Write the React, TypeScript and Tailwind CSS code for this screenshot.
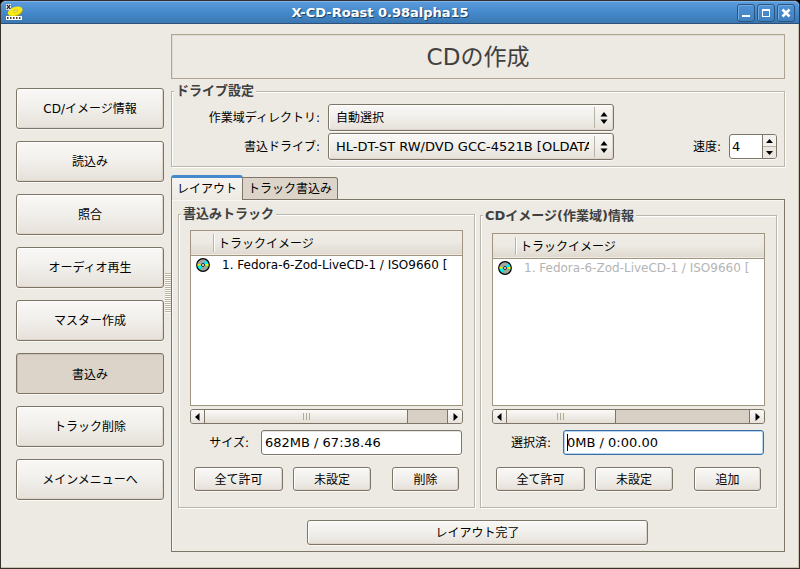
import type { ReactNode } from "react";

const raised =
  "rounded-[3px] border border-[#7d7668] bg-linear-to-b from-[#f9f8f6] via-[#f1efeb] to-[#e6e0d9] shadow-[0_1px_0_#f8f7f4,inset_1px_1px_0_#fff,inset_-1px_-1px_0_#ddd5cb]";

function AppLogo() {
  return (
    <svg width="17" height="17" viewBox="0 0 17 17" aria-hidden="true">
      <g transform="rotate(-20 9 7)">
        <ellipse cx="9" cy="8.400" rx="7.600" ry="4.200" fill="#b89c18" />
        <ellipse cx="9" cy="7.200" rx="7.600" ry="4.200" fill="#f6ea10" />
        <ellipse cx="9.500" cy="7.200" rx="2" ry="1" fill="#fffbb0" stroke="#b89c10" strokeWidth=".6" />
      </g>
      <rect x="0" y="0" width="5" height="6" fill="#e8e8e8" />
      <path d="M.8.8l3.6 4.4M4.2.8L.8 5.2" stroke="#222" strokeWidth="1.2" />
      <rect x="0" y="12" width="16" height="4" fill="#fff" />
      <path
        d="M1 14h2M4 14h2M7 14h2M10 14h2M13 14h2"
        stroke="#444"
        strokeWidth="2"
        strokeDasharray="1 .5"
      />
    </svg>
  );
}

function DiscIcon() {
  return (
    <svg width="14" height="14" viewBox="0 0 14 14" className="block" aria-hidden="true">
      <circle cx="7" cy="7" r="6.300" fill="#a4a4a4" />
      <path d="M7 7L1 5.500V8Z" fill="#f4f400" />
      <path d="M7 7L1 8A6 6 0 0 0 4 12.200Z" fill="#00f0f0" />
      <path d="M7 7L4 12.200L5.500 13Z" fill="#40d080" />
      <path d="M7 7L10 1.800A6 6 0 0 1 13 5.500Z" fill="#00f0f0" />
      <path d="M7 7L13 5.500V8.200Z" fill="#f4f400" />
      <path d="M7 7L13 8.200L12 10Z" fill="#60d060" />
      <circle cx="7" cy="7" r="6.300" fill="none" stroke="#000" strokeWidth="1.200" />
      <circle cx="7" cy="7" r="1.500" fill="#fff" stroke="#222" strokeWidth="1" />
    </svg>
  );
}

function Arrow({ d, w, h }: { d: string; w: number; h: number }) {
  return (
    <svg width={w} height={h} viewBox={`0 0 ${w} ${h}`} className="block" aria-hidden="true">
      <path d={d} fill="#000" />
    </svg>
  );
}

function TitleButton({ label, children }: { label: string; children: ReactNode }) {
  return (
    <button
      type="button"
      aria-label={label}
      className="flex size-[18px] items-center justify-center rounded-[3px] border border-[#2b5580] bg-linear-to-b from-[#4f92d6] to-[#4080bf] shadow-[inset_1px_1px_0_#74ace2]"
    >
      <svg width="10" height="10" viewBox="0 0 10 10" aria-hidden="true">
        {children}
      </svg>
    </button>
  );
}

function NavButton({ label, active }: { label: string; active?: boolean }) {
  return (
    <button
      type="button"
      aria-pressed={active ? true : undefined}
      className={
        active
          ? "h-[41px] w-full rounded-[3px] border border-[#7d7668] bg-[#dcd4c9] pt-[2px] shadow-[0_1px_0_#f8f7f4,inset_1px_1px_0_#c9c0b4]"
          : `h-[41px] w-full ${raised}`
      }
    >
      {label}
    </button>
  );
}

function Combo({ id, label, value, small }: { id: string; label: string; value: string; small?: boolean }) {
  return (
    <>
      <label htmlFor={id} className="mr-2 w-[148px] text-right">
        {label}
      </label>
      <div className="relative w-[286px]">
        <select
          id={id}
          className={`block h-[27px] w-full appearance-none pr-6 pl-[7px] ${small ? "text-[12px]" : "text-[13px]"} ${raised}`}
        >
          <option>{value}</option>
        </select>
        <span className="pointer-events-none absolute top-[3px] right-[19px] h-[21px] border-l border-[#b9b2a7]" />
        <span className="pointer-events-none absolute top-2 right-[6px]">
          <Arrow w={8} h={12} d="M4 0L7.500 4.500H.5ZM.5 7.500H7.500L4 12Z" />
        </span>
      </div>
    </>
  );
}

interface TrackPanelProps {
  id: string;
  title: string;
  titleHeight: string;
  listHeight: string;
  dimmed?: boolean;
  focused?: boolean;
  thumb: string;
  fieldLabel: string;
  fieldValue: string;
  lastAction: string;
}

function TrackPanel(p: TrackPanelProps) {
  return (
    <fieldset className="min-w-0 border border-[#bab5ad] shadow-[1px_1px_0_#fff,inset_1px_1px_0_#fff]">
      <legend className={`ml-[2px] bg-[#edeae3] px-[2px] text-[13px] font-bold text-[#404040] ${p.titleHeight}`}>
        {p.title}
      </legend>
      <div className="px-[11px] pt-[9px] pb-4">
        <div className={`overflow-hidden border border-[#a09580] bg-white ${p.listHeight}`}>
          <table className="w-full table-fixed border-collapse">
            <thead>
              <tr className="h-6 border-b border-[#a09580] bg-linear-to-b from-[#efece6] via-[#edeae3] to-[#dfd9d0]">
                <th className="w-[23px] p-0">
                  <span className="ml-auto block h-[18px] border-r border-[#b9b2a7] shadow-[1px_0_0_#fff]" />
                </th>
                <th className="px-1 pt-[2px] pb-0 text-left font-normal">トラックイメージ</th>
              </tr>
            </thead>
            <tbody>
              <tr className="h-[18px]">
                <td className="p-0 pl-[5px]">
                  <DiscIcon />
                </td>
                <td
                  className={`overflow-hidden py-0 pr-0 pl-2 leading-[18px] whitespace-nowrap ${p.dimmed ? "text-[#b4b4b4]" : "text-black"}`}
                >
                  1. Fedora-6-Zod-LiveCD-1 / ISO9660 [
                </td>
              </tr>
            </tbody>
          </table>
        </div>
        <div className="mt-[3px] flex h-[15px] rounded-[3px] border border-[#7d7668] bg-[#d8d0c4]">
          <button
            type="button"
            aria-label="左へスクロール"
            className="flex w-[14px] items-center justify-center rounded-l-[2px] border-r border-[#7d7668] bg-linear-to-b from-[#fafaf8] to-[#e8e3dc]"
          >
            <Arrow w={5} h={8} d="M0 4L4.500 0V8Z" />
          </button>
          <div className="flex flex-1">
            <div
              className={`flex items-center justify-center gap-[2px] border-r border-[#7d7668] bg-linear-to-b from-[#fbfaf8] to-[#e4ded5] ${p.thumb}`}
            >
              <i className="h-[7px] w-px bg-[#b4a994]" />
              <i className="h-[7px] w-px bg-[#b4a994]" />
              <i className="h-[7px] w-px bg-[#b4a994]" />
            </div>
          </div>
          <button
            type="button"
            aria-label="右へスクロール"
            className="flex w-[15px] items-center justify-center rounded-r-[2px] border-l border-[#7d7668] bg-linear-to-b from-[#fafaf8] to-[#e8e3dc]"
          >
            <Arrow w={5} h={8} d="M.5 0L5 4L.5 8Z" />
          </button>
        </div>
        <div className="mt-[6px] flex items-center">
          <label htmlFor={p.id} className="w-[71px] pr-3 text-right">
            {p.fieldLabel}
          </label>
          <div className="relative min-w-0 flex-1 pr-px">
            <input
              id={p.id}
              defaultValue={p.fieldValue}
              className={`block h-[25px] w-full rounded-[3px] border bg-white px-[3px] text-[13px] outline-none ${
                p.focused
                  ? "border-[#3a6ea5] shadow-[inset_0_0_0_1px_#b8d3ee]"
                  : "border-[#7d7668] shadow-[0_1px_0_#f8f7f4,inset_0_1px_0_#e8e5e0]"
              }`}
            />
            {p.focused && <span className="absolute top-1 left-1 h-[17px] w-px bg-black" />}
          </div>
        </div>
        <div className="mt-3 flex pr-1 pl-1">
          <button type="button" className={`h-6 w-[89px] pt-px ${raised}`}>
            全て許可
          </button>
          <button type="button" className={`ml-[10px] h-6 w-[78px] pt-px ${raised}`}>
            未設定
          </button>
          <button type="button" className={`ml-auto h-6 w-[67px] pt-px ${raised}`}>
            {p.lastAction}
          </button>
        </div>
      </div>
    </fieldset>
  );
}

const navItems = [
  "CD/イメージ情報",
  "読込み",
  "照合",
  "オーディオ再生",
  "マスター作成",
  "書込み",
  "トラック削除",
  "メインメニューへ",
];

export default function App() {
  return (
    <div className="min-h-screen bg-black font-['DejaVu_Sans','Noto_Sans_CJK_JP',sans-serif] text-[12px] leading-[14px] text-black">
      <div className="flex min-h-screen flex-col rounded-t-[6px] border border-[#352f2d] bg-[#edeae3]">
        <header className="flex h-[23px] items-center rounded-t-[5px] border-t border-b border-t-[#7db2e6] border-b-[#2c5078] bg-linear-to-b from-[#5b9bdd] via-[#4489cb] to-[#3b78b2] pr-1 pl-[5px]">
          <AppLogo />
          <h1 className="flex-1 text-center text-[13px] font-bold text-white [text-shadow:1px_1px_0_#1f4468]">
            X-CD-Roast 0.98alpha15
          </h1>
          <div className="flex gap-[2px]">
            <TitleButton label="最小化">
              <rect x="1" y="7" width="8" height="2" fill="#fff" />
            </TitleButton>
            <TitleButton label="最大化">
              <path d="M1 1H9V9H1ZM2 3V8H8V3Z" fill="#fff" fillRule="evenodd" />
            </TitleButton>
            <TitleButton label="閉じる">
              <path d="M1.500 1.500L8.500 8.500M8.500 1.500L1.500 8.500" stroke="#fff" strokeWidth="2.600" />
            </TitleButton>
          </div>
        </header>

        <div className="flex flex-1 items-start border-r border-b border-[#c9c1b4] pt-[10px] pr-[13px] pb-[15px] pl-[15px]">
          <nav className="mt-[54px] flex w-[148px] flex-col gap-3">
            {navItems.map((item) => (
              <NavButton key={item} label={item} active={item === "書込み"} />
            ))}
          </nav>
          <div className="ml-px h-10 w-[6px] self-center bg-[repeating-linear-gradient(to_bottom,#bdb3a2_0px,#bdb3a2_1px,#fbfaf8_1px,#fbfaf8_2px)]" />

          <main className="min-w-0 flex-1">
            <h2 className="flex h-[45px] items-center justify-center border border-[#b0a590] text-[23px] leading-7 text-[#404040] shadow-[inset_1px_1px_0_#e0dcd3]">
              CDの作成
            </h2>

            <fieldset className="mt-[5px] border border-[#bab5ad] shadow-[1px_1px_0_#fff,inset_1px_1px_0_#fff]">
              <legend className="ml-[2px] h-[14px] bg-[#edeae3] px-[2px] text-[13px] font-bold text-[#404040]">
                ドライブ設定
              </legend>
              <div className="flex flex-col gap-[2px] py-[6px] pr-[7px]">
                <div className="flex items-center">
                  <Combo id="work-dir" label="作業域ディレクトリ:" value="自動選択" small />
                </div>
                <div className="flex items-center">
                  <Combo id="write-drive" label="書込ドライブ:" value="HL-DT-ST RW/DVD GCC-4521B [OLDATAPATH]" />
                  <label htmlFor="speed" className="ml-auto pr-2">
                    速度:
                  </label>
                  <div className="flex h-[25px] w-12 overflow-hidden rounded-[3px] border border-[#7d7668] bg-white shadow-[0_1px_0_#f8f7f4]">
                    <input id="speed" defaultValue="4" className="w-0 min-w-0 flex-1 px-[2px] text-[13px] outline-none" />
                    <div className="flex w-[14px] flex-col border-l border-[#7d7668]">
                      <button type="button" aria-label="増やす" className="flex flex-1 items-center justify-center border-b border-[#b9b2a7] bg-[#f3f1ed]">
                        <Arrow w={7} h={4} d="M3.500 0L7 4H0Z" />
                      </button>
                      <button type="button" aria-label="減らす" className="flex flex-1 items-center justify-center bg-[#ebe6df]">
                        <Arrow w={7} h={4} d="M0 0H7L3.500 4Z" />
                      </button>
                    </div>
                  </div>
                </div>
              </div>
            </fieldset>

            <div role="tablist" className="relative mt-2 -mb-px flex items-end">
              <button
                type="button"
                role="tab"
                aria-selected="true"
                className="h-[25px] rounded-t-[3px] border border-t-[3px] border-b-0 border-x-[#7d7668] border-t-[#4489cb] bg-linear-to-b from-[#f6f5f2] to-[#edeae3] px-[5px]"
              >
                レイアウト
              </button>
              <button
                type="button"
                role="tab"
                aria-selected="false"
                className="h-[23px] rounded-tr-[3px] border border-l-0 border-[#7d7668] bg-[#dcd4c9] px-[5px] pt-px"
              >
                トラック書込み
              </button>
            </div>
            <div role="tabpanel" className="border border-[#7d7668] pt-[7px] pr-[7px] pb-[6px] pl-[6px] shadow-[inset_1px_1px_0_#f8f7f4]">
              <div className="grid grid-cols-2 gap-[5px]">
                <TrackPanel
                  id="size"
                  title="書込みトラック"
                  titleHeight="h-[14px]"
                  listHeight="h-[176px]"
                  thumb="w-[84%]"
                  fieldLabel="サイズ:"
                  fieldValue="682MB / 67:38.46"
                  lastAction="削除"
                />
                <TrackPanel
                  id="selected"
                  title="CDイメージ(作業域)情報"
                  titleHeight="h-[17px] leading-[17px]"
                  listHeight="h-[173px]"
                  dimmed
                  focused
                  thumb="w-[45%]"
                  fieldLabel="選択済:"
                  fieldValue="0MB / 0:00.00"
                  lastAction="追加"
                />
              </div>
              <div className="mt-3 flex justify-center">
                <button type="button" className={`h-[25px] w-[341px] ${raised}`}>
                  レイアウト完了
                </button>
              </div>
            </div>
          </main>
        </div>
      </div>
    </div>
  );
}
